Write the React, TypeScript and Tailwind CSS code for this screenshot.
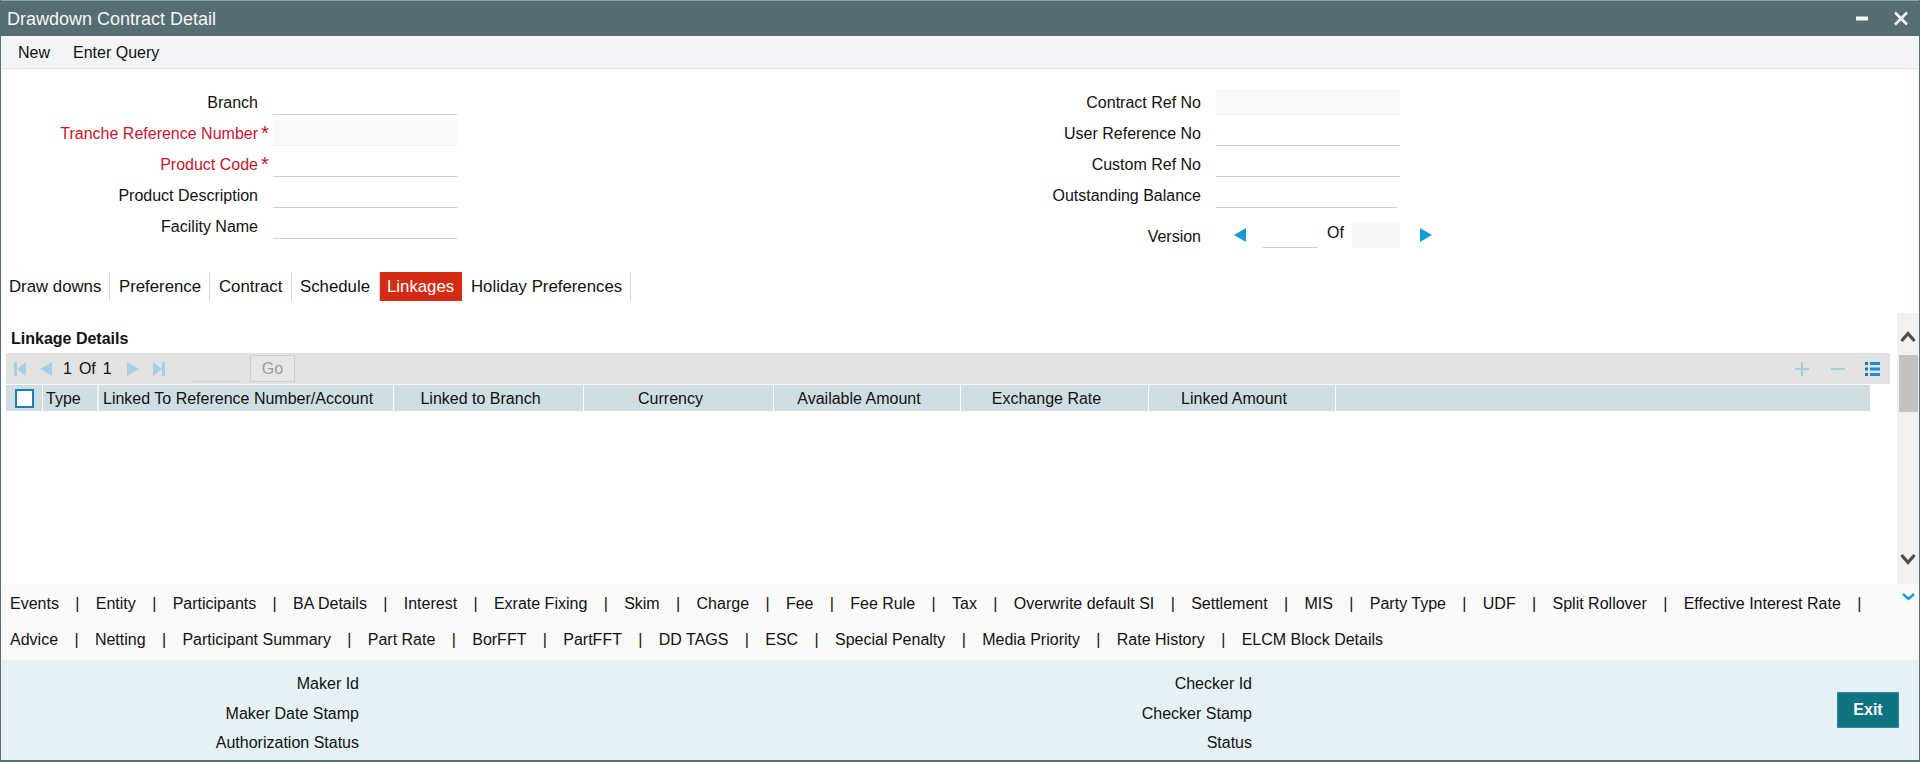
import React from "react";

const font = "[font-family:'Liberation_Sans',Arial,sans-serif]";

function Field({ label, required, filled, right, w = "w-[184px]" }: { label: string; required?: boolean; filled?: boolean; right?: boolean; w?: string }) {
  return (
    <div className="flex h-[26px]">
      <div className={`${right ? "w-[440px]" : "w-[257px]"} text-right leading-[28px] ${required ? "text-[#c9142f]" : "text-[#111]"}`}>{label}</div>
      <div className="w-[15px] pl-[3px] text-[20px] leading-[26px] text-[#c9142f]">{required ? "*" : ""}</div>
      <div className={`${w} h-[26px] ${filled ? "bg-[#f9f9f9] border-b border-[#f1f1f1]" : "border-b border-[#cfcfcf]"}`} />
    </div>
  );
}

function Tri({ dir, color, h = 14, w = 12 }: { dir: "l" | "r"; color: string; h?: number; w?: number }) {
  return (
    <svg width={w} height={h} viewBox="0 0 12 14" className="block shrink-0" preserveAspectRatio="none">
      <path d={dir === "l" ? "M12 0V14L0 7Z" : "M0 0V14L12 7Z"} fill={color} />
    </svg>
  );
}

function Tab({ label, active, w, pl }: { label: string; active?: boolean; w: string; pl: string }) {
  return (
    <div className={`${w} ${pl} h-[29px] leading-[29px] text-[16.8px] whitespace-nowrap ${active ? "bg-[#d32b14] text-white" : "text-[#111] border-r border-[#d8d8d8]"}`}>{label}</div>
  );
}

const cols: { label: string; w: string; cls: string }[] = [
  { label: "Linked To Reference Number/Account", w: "w-[295px]", cls: "pl-[4px] text-left" },
  { label: "Linked to Branch", w: "w-[190px]", cls: "pr-[16px] text-center" },
  { label: "Currency", w: "w-[190px]", cls: "pr-[16px] text-center" },
  { label: "Available Amount", w: "w-[187px]", cls: "pr-[16px] text-center" },
  { label: "Exchange Rate", w: "w-[188px]", cls: "pr-[16px] text-center" },
  { label: "Linked Amount", w: "w-[187px]", cls: "pr-[16px] text-center" },
];

function Links({ items, trailing }: { items: string[]; trailing?: boolean }) {
  return (
    <div className="flex h-[36px] items-center pl-[9px]">
      {items.map((t, i) => (
        <React.Fragment key={t}>
          <span className="whitespace-nowrap text-[#111]">{t}</span>
          {i < items.length - 1 || trailing ? <span className="mx-[16.35px] text-[#111]">|</span> : null}
        </React.Fragment>
      ))}
    </div>
  );
}

function Audit({ label, w }: { label: string; w: string }) {
  return <div className={`${w} h-[29.5px] text-right leading-[29.5px] text-[#111]`}>{label}</div>;
}

export default function App() {
  return (
    <div className={`${font} text-[16px] w-[1920px] h-[765px] bg-white overflow-hidden`}>
      <div className="h-[762px] flex flex-col border-x border-b-2 border-[#56707a]">
        <div className="h-px bg-[#8fa3a9] shrink-0" />
        <div className="h-[35px] shrink-0 bg-[#566d73] flex items-center justify-between pl-[6px] pr-[10px] text-white">
          <span className="text-[18px] leading-none text-[#f4f6f6]">Drawdown Contract Detail</span>
          <div className="flex items-center gap-[25px]">
            <svg width="12" height="5" viewBox="0 0 12 5" className="block"><rect width="12" height="4" y="0.5" rx="0.5" fill="#f6f6f6" /></svg>
            <svg width="16" height="15" viewBox="0 0 16 15" className="block"><path d="M2 1.5L14 13.5M14 1.5L2 13.5" stroke="#f6f6f6" strokeWidth="2.6" /></svg>
          </div>
        </div>
        <div className="h-[33px] shrink-0 bg-[#f2f4f8] border-b border-[#e2e2e2] flex items-center pl-[17px] pt-[2px] gap-[23px] text-[#111]">
          <span>New</span>
          <span>Enter Query</span>
        </div>

        <div className="flex h-[203px] shrink-0 pt-[20px]">
          <div className="w-[760px] flex flex-col gap-[5px]">
            <Field label="Branch" />
            <Field label="Tranche Reference Number" required filled />
            <Field label="Product Code" required />
            <Field label="Product Description" />
            <Field label="Facility Name" />
          </div>
          <div className="flex flex-col gap-[5px]">
            <Field right label="Contract Ref No" filled />
            <Field right label="User Reference No" />
            <Field right label="Custom Ref No" />
            <Field right label="Outstanding Balance" w="w-[181px]" />
            <div className="flex h-[26px] mt-[9px]">
              <div className="w-[440px] text-right leading-[30px] text-[#111]">Version</div>
              <div className="w-[33px]" />
              <div className="flex h-[26px] items-center"><Tri dir="l" color="#159bd6" /></div>
              <div className="w-[17px]" />
              <div className="w-[55px] h-[26px] border-b border-[#cfcfcf]" />
              <div className="w-[34px] pl-[9px] leading-[22px] text-[#111]">Of</div>
              <div className="w-[48px] h-[26px] bg-[#f8f8f8]" />
              <div className="w-[20px]" />
              <div className="flex h-[26px] items-center"><Tri dir="r" color="#159bd6" /></div>
            </div>
          </div>
        </div>

        <div className="flex h-[29px] shrink-0">
          <Tab label="Draw downs" w="w-[109px]" pl="pl-[8px]" />
          <Tab label="Preference" w="w-[100px]" pl="pl-[9px]" />
          <Tab label="Contract" w="w-[82px]" pl="pl-[9px]" />
          <Tab label="Schedule" w="w-[88px]" pl="pl-[8px]" />
          <Tab label="Linkages" active w="w-[82px]" pl="pl-[7px]" />
          <Tab label="Holiday Preferences" w="w-[169px]" pl="pl-[9px]" />
        </div>

        <div className="flex h-[271px] shrink-0 mt-[12px]">
          <div className="w-[1895px] pl-[5px] shrink-0">
            <div className="h-[40px] pl-[5px] pt-[15px] font-bold text-[16px] leading-[22px] text-[#111]">Linkage Details</div>
            <div className="h-[31px] w-[1884px] bg-[#e2e2e2] flex items-center">
              <div className="flex items-center pl-[8px] w-[57px] gap-[14px]">
                <svg width="12" height="14" viewBox="0 0 12 14" className="block shrink-0"><path d="M0 0H3V14H0ZM12 0V14L3 7Z" fill="#a9d0e2" /></svg>
                <Tri dir="l" color="#a9d0e2" />
              </div>
              <div className="w-[64px] flex gap-[7px] text-[#111]"><span>1</span><span>Of</span><span>1</span></div>
              <div className="flex items-center gap-[14px]">
                <Tri dir="r" color="#a9d0e2" />
                <svg width="12" height="14" viewBox="0 0 12 14" className="block shrink-0"><path d="M0 0V14L9 7ZM9 0H12V14H9Z" fill="#a9d0e2" /></svg>
              </div>
              <div className="w-[49px] h-[27px] ml-[26px] border-b border-[#d2d2d2]" />
              <div className="w-[45px] h-[27px] ml-[10px] border border-[#cdcdcd] bg-[#e6e6e6] text-center leading-[25px] text-[#9c9c9c]">Go</div>
              <div className="flex-1" />
              <div className="flex items-center pr-[10px]">
                <svg width="14" height="14" viewBox="0 0 14 14" className="block"><path d="M7 0V14M0 7H14" stroke="#a5cde0" strokeWidth="2" /></svg>
                <svg width="14" height="14" viewBox="0 0 14 14" className="block ml-[22px]"><path d="M0 7H14" stroke="#a5cde0" strokeWidth="2" /></svg>
                <svg width="15" height="14" viewBox="0 0 15 14" className="block ml-[20px]"><path d="M0 1.5H3M0 7H3M0 12.5H3" stroke="#1a7ba0" strokeWidth="3" /><path d="M5 1.5H15M5 7H15M5 12.5H15" stroke="#1c8fd0" strokeWidth="3" /></svg>
              </div>
            </div>
            <div className="mt-[1px] h-[26px] w-[1864px] bg-[#cfdee3] flex leading-[27px] text-[#111]">
              <div className="w-[37px] flex items-center pl-[9px] border-r border-white">
                <div className="w-[19px] h-[19px] bg-white border-2 border-[#1b80b0]" />
              </div>
              <div className="w-[56px] pl-[3px] border-r-2 border-[#e9f1f3]">Type</div>
              {cols.map((c) => (
                <div key={c.label} className={`${c.w} ${c.cls} border-r border-white whitespace-nowrap`}>{c.label}</div>
              ))}
            </div>
          </div>
          <div className="w-[22px] ml-[1px] bg-[#f1f1f1] flex flex-col items-center">
            <div className="h-[42px] flex items-center justify-center w-full pt-[5px]">
              <svg width="16" height="12" viewBox="0 0 16 12" className="block"><path d="M1.5 10L8 2.5L14.5 10" stroke="#505050" strokeWidth="3.2" fill="none" /></svg>
            </div>
            <div className="h-[57px] w-[19px] ml-[1px] bg-[#c2c2c2]" />
            <div className="flex-1 flex items-end justify-center pb-[19px]">
              <svg width="16" height="12" viewBox="0 0 16 12" className="block"><path d="M1.5 2L8 9.5L14.5 2" stroke="#505050" strokeWidth="3.2" fill="none" /></svg>
            </div>
          </div>
        </div>

        <div className="h-[76px] shrink-0 bg-[#fafafa] flex justify-between">
          <div className="pt-[2px] flex-1 min-w-0">
            <Links trailing items={["Events", "Entity", "Participants", "BA Details", "Interest", "Exrate Fixing", "Skim", "Charge", "Fee", "Fee Rule", "Tax", "Overwrite default SI", "Settlement", "MIS", "Party Type", "UDF", "Split Rollover", "Effective Interest Rate"]} />
            <Links items={["Advice", "Netting", "Participant Summary", "Part Rate", "BorFFT", "PartFFT", "DD TAGS", "ESC", "Special Penalty", "Media Priority", "Rate History", "ELCM Block Details"]} />
          </div>
          <div className="pt-[9px] pr-[4px] shrink-0">
            <svg width="13" height="8" viewBox="0 0 13 8" className="block"><path d="M1 1L6.5 6L12 1" stroke="#1c9ad6" strokeWidth="2.4" fill="none" /></svg>
          </div>
        </div>

        <div className="flex-1 bg-[#e5f1f4] flex pt-[9px]">
          <div className="w-[358px] flex flex-col"><Audit w="w-[358px]" label="Maker Id" /><Audit w="w-[358px]" label="Maker Date Stamp" /><Audit w="w-[358px]" label="Authorization Status" /></div>
          <div className="w-[893px] flex flex-col"><Audit w="w-[893px]" label="Checker Id" /><Audit w="w-[893px]" label="Checker Stamp" /><Audit w="w-[893px]" label="Status" /></div>
          <div className="flex-1 flex justify-end pr-[20px] pt-[23px]">
            <div className="w-[62px] h-[36px] bg-[#0f7382] border border-[#2a8a98] text-white font-bold text-center leading-[34px]">Exit</div>
          </div>
        </div>
      </div>
    </div>
  );
}
